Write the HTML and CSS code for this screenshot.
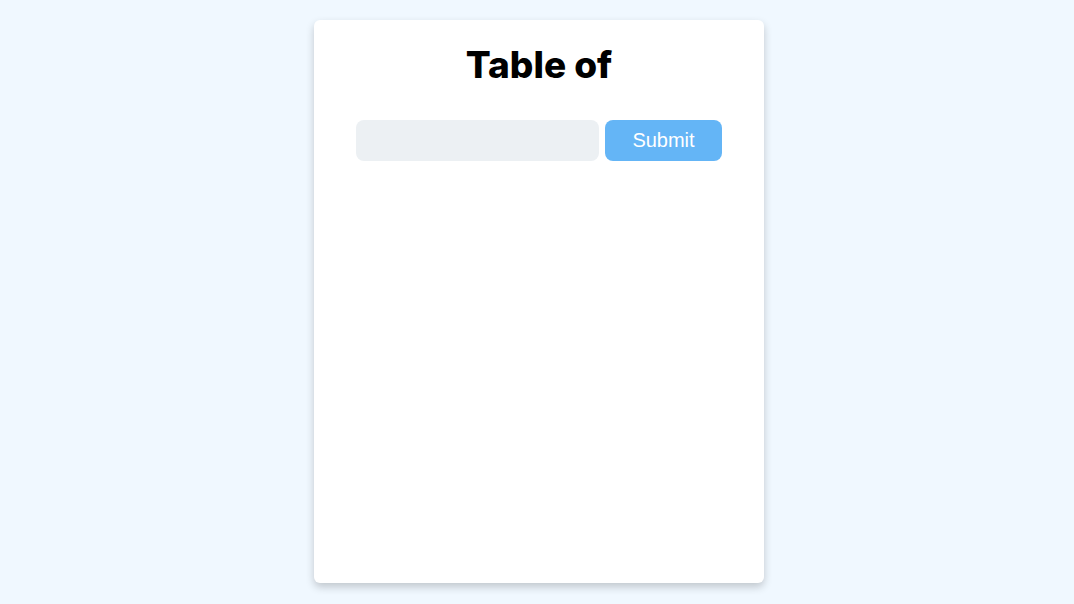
FILE: index.html
```html
<!DOCTYPE html>
<html>
<head>
<meta charset="utf-8">
<link rel="stylesheet" href="styles.css">
</head>
<body>
<div class="card">
  <h1 class="title">Table of</h1>
  <form class="form">
    <input class="field" type="text">
    <button class="submit" type="button">Submit</button>
  </form>
</div>
</body>
</html>
```
FILE: styles.css
```css
html, body { margin: 0; padding: 0; }
body {
  background: #f0f8ff;
  min-height: 604px;
  display: flex;
  justify-content: center;
  align-items: flex-start;
  padding-left: 4px;
  box-sizing: border-box;
}
.card {
  margin-top: 20px;
  width: 450px;
  height: 563px;
  background: #ffffff;
  border-radius: 6px;
  box-shadow: 0 4px 8px rgba(0, 0, 0, 0.2);
  box-sizing: border-box;
  padding: 20px 42px 0;
}
.title {
  margin: 0;
  text-align: center;
  font-family: Inter, "Noto Sans", sans-serif;
  font-weight: 800;
  font-size: 37px;
  line-height: 50px;
  color: #000;
}
.form {
  margin-top: 30px;
  display: flex;
  gap: 6px;
}
.field {
  width: 243px;
  height: 41px;
  border: none;
  border-radius: 8px;
  background: #ecf0f3;
  box-sizing: border-box;
  outline: none;
}
.submit {
  width: 117px;
  height: 41px;
  border: none;
  border-radius: 8px;
  background: #64b5f6;
  color: #fff;
  font-family: "Liberation Sans", Arial, sans-serif;
  font-size: 20px;
  padding: 0;
}
```
